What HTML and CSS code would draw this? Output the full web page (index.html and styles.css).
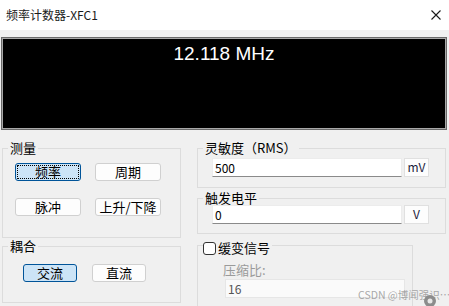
FILE: index.html
```html
<!DOCTYPE html>
<html lang="zh-CN">
<head>
    <meta charset="UTF-8">
    <meta name="viewport" content="width=device-width, initial-scale=1.0">
    <title>频率计数器-XFC1</title>
    <link rel="stylesheet" href="styles.css">
</head>
<body>
    <div class="titlebar">
        <span class="title">频率计数器-XFC1</span>
        <svg class="close" width="10" height="10" viewBox="0 0 10 10">
            <path d="M0.5 0.5 L9.5 9.5 M9.5 0.5 L0.5 9.5" stroke="#1a1a1a" stroke-width="1.1" fill="none"/>
        </svg>
    </div>

    <div class="display">
        <span class="reading">12.118 MHz</span>
    </div>

    <div class="panel">
        <div class="col">
            <fieldset class="group">
                <legend>测量</legend>
                <div class="group-body measure-body">
                    <div class="btn-grid measure-grid">
                        <button class="btn active focused">频率</button>
                        <button class="btn">周期</button>
                        <button class="btn">脉冲</button>
                        <button class="btn">上升/下降</button>
                    </div>
                </div>
            </fieldset>
            <fieldset class="group group-coupling">
                <legend>耦合</legend>
                <div class="group-body coupling-body">
                    <div class="btn-grid coupling-grid">
                        <button class="btn active">交流</button>
                        <button class="btn">直流</button>
                    </div>
                </div>
            </fieldset>
        </div>

        <div class="col">
            <fieldset class="group">
                <legend>灵敏度（RMS）</legend>
                <div class="group-body sens-body">
                    <div class="field-row">
                        <div class="textbox">500</div>
                        <div class="unit">mV</div>
                    </div>
                </div>
            </fieldset>
            <fieldset class="group group-trigger">
                <legend>触发电平</legend>
                <div class="group-body trigger-body">
                    <div class="field-row">
                        <div class="textbox">0</div>
                        <div class="unit">V</div>
                    </div>
                </div>
            </fieldset>
            <fieldset class="group group-slow">
                <legend class="check-legend">
                    <span class="checkbox"></span>
                    <span class="check-label">缓变信号</span>
                </legend>
                <div class="group-body slow-body">
                    <div class="ratio-label">压缩比:</div>
                    <div class="textbox disabled">16</div>
                </div>
            </fieldset>
        </div>
    </div>

    <div class="watermark">CSDN @博闻强识…</div>
    <svg class="wm-icon" width="14" height="14" viewBox="0 0 14 14">
        <circle cx="7" cy="7" r="6" fill="#8c8c8c"/>
        <circle cx="7" cy="7" r="2.5" fill="#e8e8e8"/>
    </svg>
</body>
</html>
```

FILE: styles.css
```css
html, body { margin: 0; padding: 0; }
body {
    width: 449px; height: 306px; overflow: hidden;
    background: #f0f0f0; color: #000;
    font-family: "Noto Sans CJK SC", "Noto Sans", sans-serif;
    font-size: 13px;
    position: relative;
}

.titlebar {
    height: 30px; background: #fff;
    display: flex; align-items: center; justify-content: space-between;
    padding: 0 8px 0 6px;
}
.title { font-size: 12px; line-height: 14px; color: #1a1a1a; }

.display {
    margin: 7px 2px 0 1px; height: 93px; box-sizing: border-box;
    background: #000;
    border: 1px solid #6a6a6a;
    box-shadow: inset 0 0 0 1px #a8a8a8;
    text-align: center; padding-top: 5px;
}
.reading {
    font-family: "Liberation Sans", Arial, sans-serif;
    font-size: 19px; line-height: 22px; color: #fff;
}

.panel {
    display: grid; grid-template-columns: 179px 249px; column-gap: 16px;
    padding: 11px 0 0 2px;
}
.col { display: flex; flex-direction: column; }

.group {
    margin: 0; padding: 0; min-width: 0;
    border: 1px solid #dcdcdc;
}
.group legend {
    margin-left: 5px; padding: 0 2px;
    font-size: 13px; line-height: 14px; height: 14px;
}

.btn {
    font-family: inherit; font-size: 13px; line-height: 16px;
    height: 18px; padding: 0; margin: 0;
    background: #fdfdfd; color: #000;
    border: 1px solid #d0d0d0; border-radius: 3px;
}
.btn.active { background: #cce4f7; border-color: #005499; }
.btn.focused { outline: 1px dotted #000; outline-offset: -3px; }

.btn-grid { display: grid; }
.measure-body { padding: 8px 0 21px 12px; }
.measure-grid { grid-template-columns: 66px 66px; column-gap: 14px; row-gap: 17px; }
.group-coupling { margin-top: 1px; }
.coupling-body { padding: 11px 0 20px 20px; }
.coupling-grid { grid-template-columns: 54px 54px; column-gap: 15px; }

.field-row { display: flex; gap: 2px; }
.textbox {
    width: 190px; height: 19px; box-sizing: border-box;
    background: #fff; border: 1px solid #ececec; border-bottom-color: #8a8a8a;
    font-size: 12px; line-height: 17px; padding-left: 2px;
}
.unit {
    width: 25px; height: 19px; box-sizing: border-box;
    background: #fdfdfd; border: 1px solid #e0e0e0;
    font-size: 12px; line-height: 16px; text-align: center; color: #1c1c3c;
}

.sens-body { padding: 3px 0 10px 14px; }
.group-trigger { margin-top: 3px; }
.trigger-body { padding: 0 0 9px 14px; }
.group-slow { width: 216px; box-sizing: border-box; margin-top: 4px; }
.slow-body { padding: 11px 0 30px 25px; }

.check-legend.check-legend { margin-left: 5px; padding: 0 2px 0 0; display: flex; align-items: flex-start; }
.checkbox {
    width: 13px; height: 13px; box-sizing: border-box; margin-top: 4px;
    border: 1px solid #333; border-radius: 3px; background: #fff;
}
.check-label { margin-left: 2px; margin-top: 3px; line-height: 14px; }

.ratio-label { color: #9a9a9a; line-height: 14px; }
.textbox.disabled {
    width: 180px; margin: 2px 0 0 2px;
    background: #fafafa; border-color: #e6e6e6; color: #555;
}

.watermark {
    position: absolute; left: 358px; top: 288px;
    font-size: 10.5px; line-height: 13px;
    color: rgba(140, 140, 140, 0.75); white-space: nowrap;
}
.wm-icon { position: absolute; left: 423px; top: 294px; }
```
